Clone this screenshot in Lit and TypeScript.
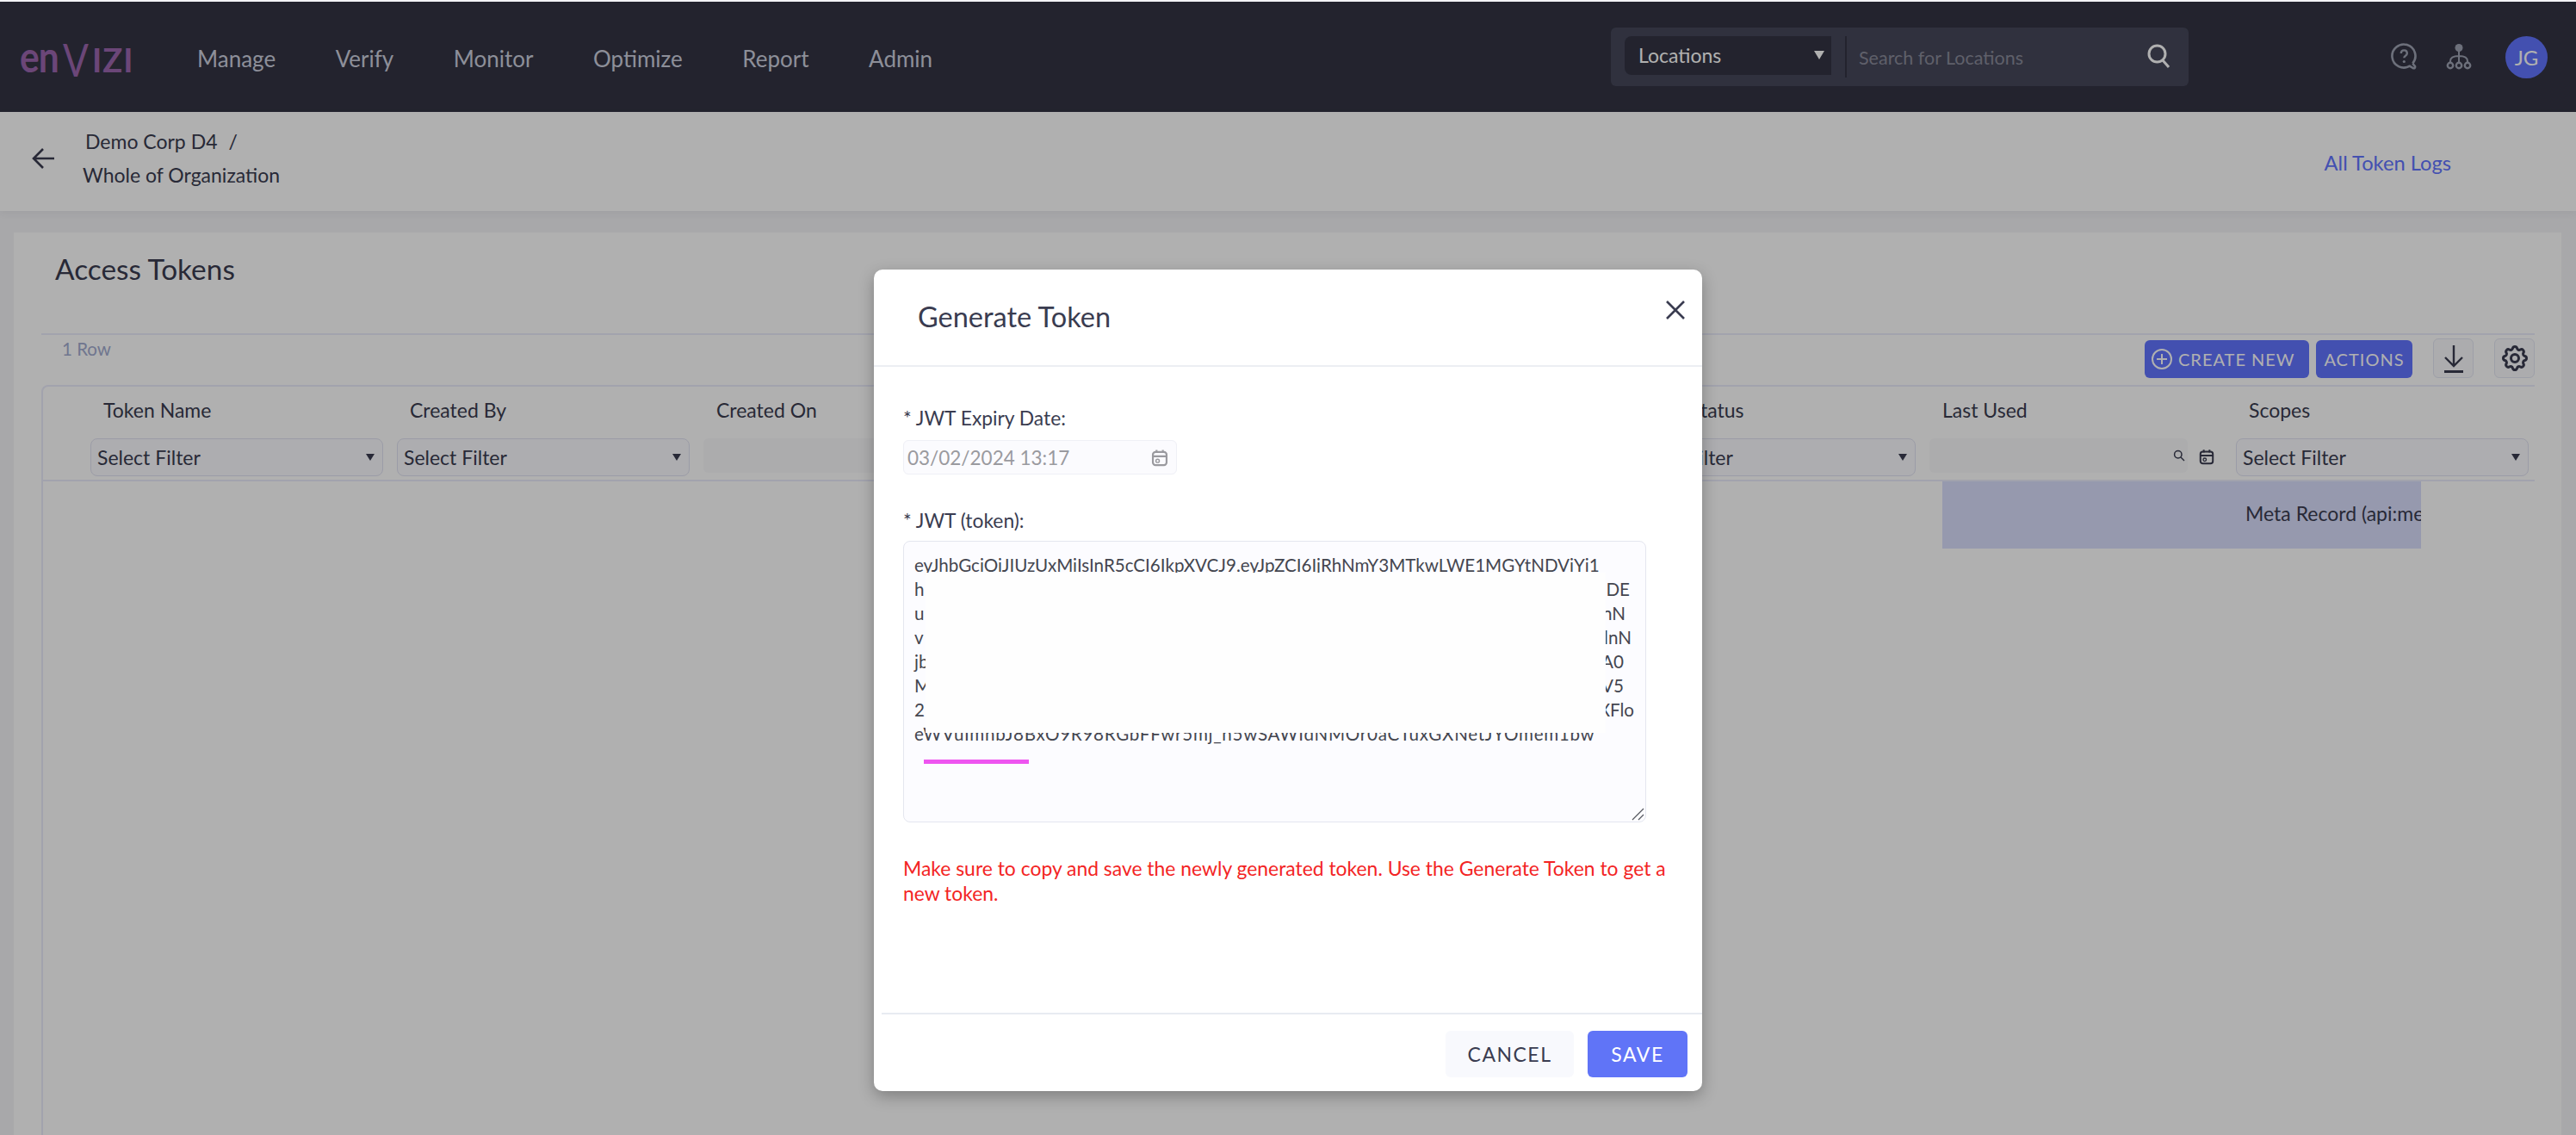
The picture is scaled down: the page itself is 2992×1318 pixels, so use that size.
import { LitElement, html, css, svg } from 'lit';
import { customElement } from 'lit/decorators.js';

const NAV = ['Manage', 'Verify', 'Monitor', 'Optimize', 'Report', 'Admin'];

// empty heads are the columns that sit fully behind the dialog
const COLUMNS = [
  { head: 'Token Name', filter: 'select', indent: 23 },
  { head: 'Created By', filter: 'select', indent: 23 },
  { head: 'Created On', filter: 'date', indent: 23 },
  { head: '', filter: 'none', indent: 23 },
  { head: '', filter: 'none', indent: 23 },
  { head: 'Status', filter: 'select', indent: 86 },
  { head: 'Last Used', filter: 'date', indent: 23 },
  { head: 'Scopes', filter: 'select', indent: 23 },
];

const TOKEN_FIRST = 'eyJhbGciOiJIUzUxMiIsInR5cCI6IkpXVCJ9.eyJpZCI6IjRhNmY3MTkwLWE1MGYtNDViYi1';
const TOKEN_LAST = 'eWVuImhbJ8BxO9R98RGbFFwr5mj_h5wSAWIdNMOr0aCTuxGXNetJYOmem1bw';
const TOKEN_ROWS = [
  { start: 'h', end: 'DE', width: 831 },
  { start: 'u', end: 'nN', width: 826 },
  { start: 'v', end: 'lnN', width: 833 },
  { start: 'jb', end: 'A0', width: 824 },
  { start: 'M', end: 'V5', width: 824 },
  { start: '2', end: 'XFlo', width: 836 },
];

const calendarIcon = svg`<rect x="2.5" y="4" width="13" height="12.5" rx="2.5" fill="none" stroke="currentColor" stroke-width="1.8"/><path d="M2.5 8h13 M6 2v3 M12 2v3" fill="none" stroke="currentColor" stroke-width="1.8"/><circle cx="7" cy="12.4" r="1.6" fill="none" stroke="currentColor" stroke-width="1.2"/>`;

@customElement('app-root')
export class AppRoot extends LitElement {
  static override styles = css`
    :host {
      display: block;
      width: 2992px;
      height: 1318px;
      font-family: 'Lato', 'Noto Sans', sans-serif;
      color: #3a3c50;
    }
    * {
      box-sizing: border-box;
    }
    .page {
      position: relative;
      width: 2992px;
      height: 1318px;
      padding-top: 2px;
      overflow: hidden;
      background: #f3f3f6;
      display: flex;
      flex-direction: column;
    }
    .scrim {
      position: absolute;
      inset: 2px 0 0 0;
      background: rgba(0, 0, 0, 0.31);
    }

    /* top bar */
    .topbar {
      flex: none;
      height: 128px;
      display: flex;
      align-items: center;
      background: #333443;
    }
    .logo {
      width: 130px;
      margin: -4px 0 0 23px;
      color: #9b66ae;
      display: flex;
      align-items: baseline;
      height: 60px;
      line-height: 60px;
      font-weight: 700;
      white-space: nowrap;
    }
    .logo .low {
      display: inline-block;
      width: 50px;
      font-size: 50px;
      letter-spacing: -1px;
      transform: scaleX(0.85);
      transform-origin: left;
    }
    .logo .v {
      display: inline-block;
      width: 34px;
      font-size: 52px;
      font-weight: 400;
      transform: translateY(5px) scaleX(0.85);
      transform-origin: left;
    }
    .logo .cap {
      font-size: 38px;
      letter-spacing: 1px;
    }
    .nav {
      display: flex;
      gap: 69.5px;
      margin: 3px 0 0 76px;
      font-size: 26px;
      color: #cccfde;
    }
    .search {
      margin-left: auto;
      width: 671px;
      height: 68px;
      padding: 10px 0 0 16px;
      border-radius: 6px;
      background: #46485b;
      display: flex;
      align-items: flex-start;
    }
    .loc {
      width: 240px;
      height: 45px;
      padding: 0 8px 2px 16px;
      border-radius: 8px 0 0 8px;
      background: #333443;
      color: #ffffff;
      font-size: 23px;
      display: flex;
      align-items: center;
      justify-content: space-between;
    }
    .caret {
      width: 0;
      height: 0;
      border-left: 6px solid transparent;
      border-right: 6px solid transparent;
      border-top: 10px solid currentColor;
    }
    .sep {
      width: 2px;
      height: 48px;
      margin-left: 16px;
      background: #333443;
    }
    .placeholder {
      margin: 12px 0 0 14px;
      font-size: 21.5px;
      color: #8a8b9a;
    }
    .search svg {
      margin: 8px 21px 0 auto;
      color: #ffffff;
    }
    .tools {
      margin-left: 235px;
      margin-right: 33px;
      display: flex;
      align-items: center;
    }
    .tools svg {
      color: #9ea3b3;
      display: block;
    }
    .tools .org {
      margin-left: 32px;
    }
    .avatar {
      width: 49px;
      height: 49px;
      margin-left: 39px;
      border-radius: 50%;
      background: #6274ff;
      color: #ffffff;
      font-size: 24px;
      display: flex;
      align-items: center;
      justify-content: center;
    }

    /* breadcrumb band */
    .band {
      flex: none;
      height: 115px;
      padding-bottom: 8px;
      background: #ffffff;
      box-shadow: 0 3px 8px rgba(60, 60, 80, 0.06);
      display: flex;
      align-items: center;
    }
    .band .back {
      margin-left: 37px;
      color: #3a3c50;
    }
    .crumbs {
      margin-left: 32px;
      font-size: 23px;
      line-height: 39px;
    }
    .crumbs .parent {
      margin-left: 3px;
      display: flex;
      gap: 13px;
    }
    .logs {
      margin: 10px 145px 0 auto;
      font-size: 23.7px;
      color: #6274ff;
    }

    /* card */
    .card {
      flex: 1;
      margin: 25px 17px 0 16px;
      padding: 0 31px 0 32px;
      background: #ffffff;
    }
    .title {
      height: 117px;
      padding: 22px 0 0 16px;
      font-size: 33.4px;
      line-height: 40px;
    }
    .toolbar {
      height: 60px;
      padding: 0 0 8px 24px;
      border-top: 2px solid #ebecfb;
      display: flex;
      align-items: flex-end;
    }
    .rows {
      align-self: flex-start;
      margin-top: 4px;
      font-size: 20.5px;
      color: #a2abcf;
    }
    .btn {
      height: 44px;
      border: 0;
      border-radius: 6px;
      background: #6274ff;
      color: #ffffff;
      font: inherit;
      font-size: 20px;
      letter-spacing: 1px;
      display: flex;
      align-items: center;
    }
    .create {
      width: 191px;
      margin-left: auto;
      padding-left: 8px;
      gap: 7px;
    }
    .actions {
      width: 112px;
      margin-left: 8px;
      justify-content: center;
    }
    .square {
      width: 47px;
      height: 46px;
      margin-left: 24px;
      border: 1px solid #e4e7f3;
      border-radius: 6px;
      background: #f9fafd;
      display: flex;
      align-items: center;
      justify-content: center;
    }
    .table {
      height: 900px;
      border-top: 2px solid #ebecfb;
      border-left: 2px solid #ebecfb;
      border-top-left-radius: 8px;
    }
    .table-head {
      height: 110px;
      padding-left: 47px;
      border-bottom: 2px solid #ebecfb;
      display: grid;
      grid-template-columns: repeat(8, 356px);
      grid-template-rows: 60px 44px;
    }
    .head-label {
      padding-top: 12px;
      font-size: 23px;
      line-height: 30px;
    }
    .filter-cell {
      padding: 0 8px;
      display: flex;
      align-items: center;
    }
    .select {
      width: 340px;
      height: 44px;
      padding: 0 9px 0 7px;
      border: 1px solid #e1e3f2;
      border-radius: 8px;
      background: #fbfbff;
      font-size: 23px;
      display: flex;
      align-items: center;
      justify-content: space-between;
    }
    .select .caret {
      border-left-width: 5px;
      border-right-width: 5px;
      border-top-width: 8px;
    }
    .date {
      width: 300px;
      height: 40px;
      margin-bottom: 4px;
      padding-right: 3px;
      border-radius: 6px;
      background: #f9f9fb;
      display: flex;
      align-items: center;
      justify-content: flex-end;
    }
    .filter-cell .cal {
      margin: 0 0 2px 12px;
      flex: none;
    }
    .token-row {
      width: 556px;
      height: 78px;
      margin-left: 2206px;
      padding: 0 0 4px 352px;
      background: #d9defc;
      font-size: 23px;
      white-space: nowrap;
      overflow: hidden;
      display: flex;
      align-items: center;
    }

    /* dialog */
    .modal {
      position: absolute;
      left: 1015px;
      top: 313px;
      width: 962px;
      height: 954px;
      border-radius: 10px;
      background: #ffffff;
      box-shadow: 0 6px 18px rgba(0, 0, 0, 0.28);
      display: flex;
      flex-direction: column;
    }
    .modal-head {
      flex: none;
      height: 113px;
      padding: 0 19px 0 51px;
      border-bottom: 2px solid #eceef3;
      display: flex;
      justify-content: space-between;
      align-items: center;
    }
    .modal-title {
      margin-top: -3px;
      font-size: 32.5px;
    }
    .close {
      align-self: flex-start;
      margin-top: 35px;
      display: block;
    }
    .modal-body {
      flex: 1;
      padding: 44px 0 0 34px;
    }
    .label {
      font-size: 22.8px;
      line-height: 30px;
    }
    .expiry {
      width: 318px;
      height: 40px;
      margin-top: 11px;
      padding: 0 8px 0 4px;
      border: 1px solid #eff0f6;
      border-radius: 6px;
      background: #fbfbfe;
      color: #9a9a9f;
      font-size: 22.5px;
      display: flex;
      align-items: center;
      justify-content: space-between;
    }
    .label.second {
      margin-top: 38px;
    }
    .token {
      position: relative;
      width: 863px;
      height: 327px;
      margin-top: 9px;
      padding: 13px 0 0 12px;
      border: 1px solid #e4e6ef;
      border-radius: 8px;
      background: #fcfcff;
      font-size: 20.6px;
      line-height: 28px;
      color: #44464f;
      white-space: nowrap;
    }
    .token-line {
      display: flex;
      justify-content: space-between;
    }
    .token-last {
      letter-spacing: 0.7px;
    }
    .redact {
      position: absolute;
      left: 25px;
      top: 36px;
      width: 790px;
      height: 186px;
      background: #fefefe;
    }
    .mark {
      position: absolute;
      left: 23px;
      top: 253px;
      width: 122px;
      height: 5px;
      background: #ee55f0;
    }
    .grip {
      position: absolute;
      right: 1px;
      bottom: 1px;
      display: block;
    }
    .error {
      width: 900px;
      margin-top: 39px;
      color: #f32424;
      font-size: 22.9px;
      line-height: 29px;
    }
    .modal-foot {
      flex: none;
      height: 91px;
      margin-left: 9px;
      padding: 19px 17px 0 0;
      border-top: 2px solid #e8ebf2;
      display: flex;
      justify-content: flex-end;
      gap: 16px;
    }
    .foot-btn {
      height: 54px;
      border: 0;
      border-radius: 6px;
      font: inherit;
      font-size: 23px;
      letter-spacing: 1.5px;
    }
    .cancel {
      width: 149px;
      background: #f8f9fd;
      color: #3a3c50;
    }
    .save {
      width: 116px;
      background: #6074f7;
      color: #ffffff;
    }
  `;

  renderFilter(filter: string) {
    if (filter === 'select') {
      return html`<div class="select">Select Filter<span class="caret"></span></div>`;
    }
    if (filter === 'date') {
      return html`
        <div class="date">
          <svg width="14" height="14" viewBox="0 0 14 14" fill="none" stroke="currentColor" stroke-width="1.5">
            <circle cx="5.8" cy="5.8" r="4.2"></circle>
            <path d="M9 9l4 4"></path>
          </svg>
        </div>
        <svg class="cal" width="20" height="20" viewBox="0 0 18 18">${calendarIcon}</svg>
      `;
    }
    return '';
  }

  renderTopbar() {
    return html`
      <header class="topbar">
        <div class="logo">
          <span class="low">en</span><span class="v">V</span><span class="cap">IZI</span>
        </div>
        <nav class="nav">${NAV.map((item) => html`<span>${item}</span>`)}</nav>
        <div class="search">
          <div class="loc">Locations<span class="caret"></span></div>
          <div class="sep"></div>
          <div class="placeholder">Search for Locations</div>
          <svg width="28" height="30" viewBox="0 0 28 30" fill="none" stroke="currentColor" stroke-width="3">
            <circle cx="12.5" cy="12.5" r="9.5"></circle>
            <path d="M19 20l7 8"></path>
          </svg>
        </div>
        <div class="tools">
          <svg width="32" height="32" viewBox="0 0 32 32" fill="none" stroke="currentColor" stroke-width="2.6">
            <path d="M25.3 23.7A13.5 13.5 0 1 0 21.75 26.7L25.5 29Q28.5 30 28 27L25.3 23.7" stroke-linejoin="round"></path>
            <path d="M11.8 12c0-4.8 7-4.8 7 0 0 2.8-3.5 2.6-3.5 5.2" stroke-width="2.4"></path>
            <circle cx="15.3" cy="21.5" r="1.6" fill="currentColor" stroke="none"></circle>
          </svg>
          <svg class="org" width="30" height="32" viewBox="0 0 30 32" fill="none" stroke="currentColor" stroke-width="2">
            <circle cx="15" cy="5.5" r="4.5" fill="currentColor" stroke="none"></circle>
            <path d="M15 9v14 M5 23v-2c0-4 4-6 10-6s10 2 10 6v2"></path>
            <circle cx="5" cy="26" r="3.2" stroke-width="2.4"></circle>
            <circle cx="15" cy="26" r="3.2" stroke-width="2.4"></circle>
            <circle cx="25" cy="26" r="3.2" stroke-width="2.4"></circle>
          </svg>
          <div class="avatar">JG</div>
        </div>
      </header>
    `;
  }

  renderCard() {
    return html`
      <section class="card">
        <div class="title">Access Tokens</div>
        <div class="toolbar">
          <span class="rows">1 Row</span>
          <button class="btn create">
            <svg width="24" height="24" viewBox="0 0 24 24" fill="none" stroke="currentColor" stroke-width="2">
              <circle cx="12" cy="12" r="11"></circle>
              <path d="M12 6v12 M6 12h12"></path>
            </svg>
            CREATE NEW
          </button>
          <button class="btn actions">ACTIONS</button>
          <div class="square">
            <svg width="24" height="33" viewBox="0 0 24 33" fill="none" stroke="#3a3c50" stroke-width="2.4">
              <path d="M12 1v24 M2 15l10 10 10-10"></path>
              <path d="M1 31.5h22" stroke-width="3"></path>
            </svg>
          </div>
          <div class="square">
            <svg width="36" height="36" viewBox="0 0 24 24" fill="none" stroke="#3a3c50" stroke-width="2">
              <path d="M10.325 4.317c.426 -1.756 2.924 -1.756 3.35 0a1.724 1.724 0 0 0 2.573 1.066c1.543 -.94 3.31 .826 2.37 2.37a1.724 1.724 0 0 0 1.065 2.572c1.756 .426 1.756 2.924 0 3.35a1.724 1.724 0 0 0 -1.066 2.573c.94 1.543 -.826 3.31 -2.37 2.37a1.724 1.724 0 0 0 -2.572 1.065c-.426 1.756 -2.924 1.756 -3.35 0a1.724 1.724 0 0 0 -2.573 -1.066c-1.543 .94 -3.31 -.826 -2.37 -2.37a1.724 1.724 0 0 0 -1.065 -2.572c-1.756 -.426 -1.756 -2.924 0 -3.35a1.724 1.724 0 0 0 1.066 -2.573c-.94 -1.543 .826 -3.31 2.37 -2.37c1 .608 2.296 .07 2.572 -1.065z"></path>
              <circle cx="12" cy="12" r="3"></circle>
            </svg>
          </div>
        </div>
        <div class="table">
          <div class="table-head">
            ${COLUMNS.map((col) => html`<div class="head-label" style="padding-left:${col.indent}px">${col.head}</div>`)}
            ${COLUMNS.map((col) => html`<div class="filter-cell">${this.renderFilter(col.filter)}</div>`)}
          </div>
          <div class="token-row">Meta Record (api:meta)</div>
        </div>
      </section>
    `;
  }

  renderModal() {
    return html`
      <div class="modal">
        <div class="modal-head">
          <span class="modal-title">Generate Token</span>
          <svg class="close" width="24" height="24" viewBox="0 0 24 24" fill="none" stroke="#3a3c50" stroke-width="2.6">
            <path d="M2 2l20 20 M22 2L2 22"></path>
          </svg>
        </div>
        <div class="modal-body">
          <div class="label">* JWT Expiry Date:</div>
          <div class="expiry">
            03/02/2024 13:17
            <svg width="22" height="22" viewBox="0 0 18 18">${calendarIcon}</svg>
          </div>
          <div class="label second">* JWT (token):</div>
          <div class="token">
            <div>${TOKEN_FIRST}</div>
            ${TOKEN_ROWS.map(
              (row) => html`
                <div class="token-line" style="width:${row.width}px">
                  <span>${row.start}</span><span>${row.end}</span>
                </div>
              `
            )}
            <div class="token-last">${TOKEN_LAST}</div>
            <div class="redact"></div>
            <div class="mark"></div>
            <svg class="grip" width="16" height="16" viewBox="0 0 16 16" fill="none" stroke="#55575f" stroke-width="1.2">
              <path d="M2 15L15 2 M9 15l6-6"></path>
            </svg>
          </div>
          <div class="error">
            Make sure to copy and save the newly generated token. Use the Generate Token to get a new token.
          </div>
        </div>
        <div class="modal-foot">
          <button class="foot-btn cancel">CANCEL</button>
          <button class="foot-btn save">SAVE</button>
        </div>
      </div>
    `;
  }

  override render() {
    return html`
      <div class="page">
        ${this.renderTopbar()}
        <div class="band">
          <svg class="back" width="27" height="26" viewBox="0 0 27 26" fill="none" stroke="currentColor" stroke-width="2.6">
            <path d="M26 13H3 M13 2L2 13l11 11"></path>
          </svg>
          <div class="crumbs">
            <div class="parent"><span>Demo Corp D4</span><span>/</span></div>
            <div>Whole of Organization</div>
          </div>
          <div class="logs">All Token Logs</div>
        </div>
        ${this.renderCard()}
        <div class="scrim"></div>
        ${this.renderModal()}
      </div>
    `;
  }
}

declare global {
  interface HTMLElementTagNameMap {
    'app-root': AppRoot;
  }
}
